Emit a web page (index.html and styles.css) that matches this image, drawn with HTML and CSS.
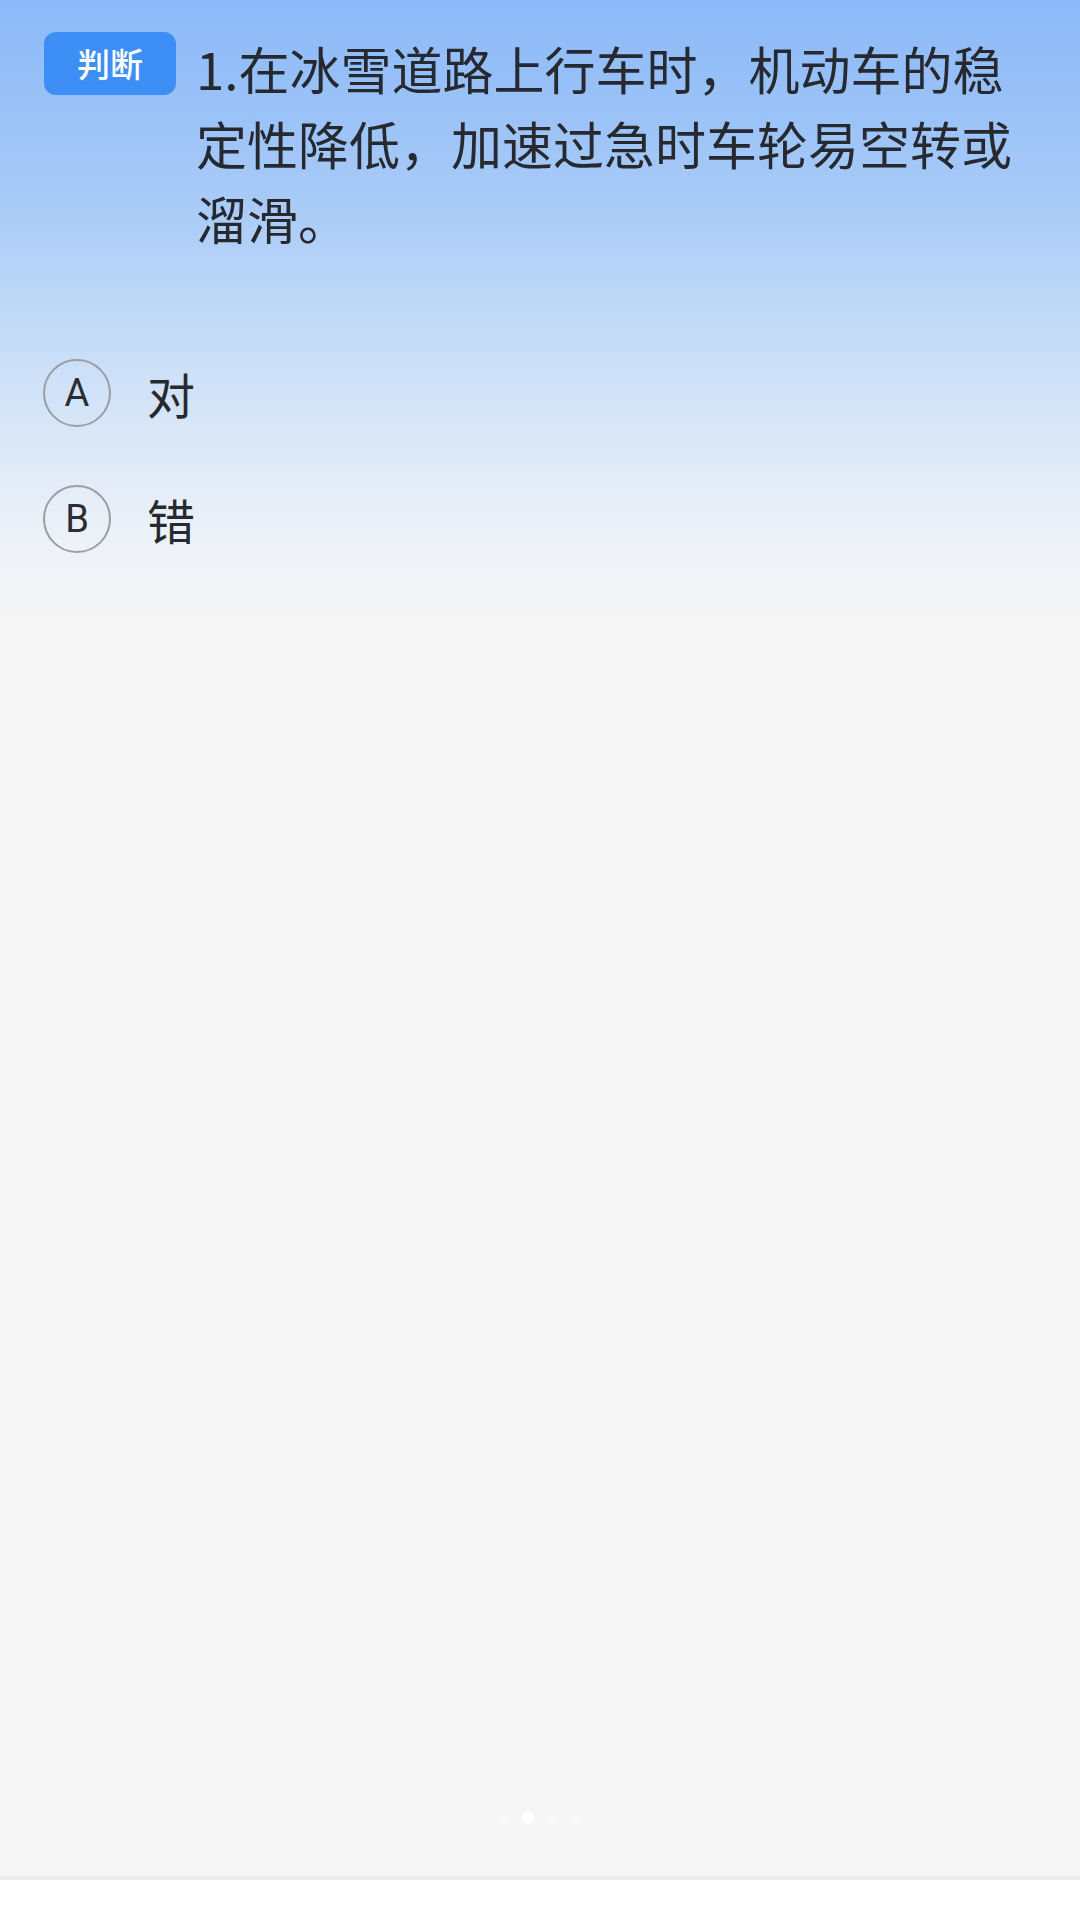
FILE: index.html
```html
<!DOCTYPE html>
<html lang="zh-CN">
<head>
    <meta charset="UTF-8">
    <meta name="viewport" content="width=device-width, initial-scale=1.0">
    <title>判断题</title>
    <link rel="stylesheet" href="styles.css">
</head>
<body>

<div class="screen">
    <div class="question">
        <span class="badge">判断</span>
        <p class="question-text">1.在冰雪道路上行车时，机动车的稳定性降低，加速过急时车轮易空转或溜滑。</p>
    </div>

    <div class="options">
        <div class="option">
            <span class="option-key">A</span>
            <span class="option-label">对</span>
        </div>
        <div class="option">
            <span class="option-key">B</span>
            <span class="option-label">错</span>
        </div>
    </div>

    <div class="pager">
        <span class="dot"></span>
        <span class="dot active"></span>
        <span class="dot"></span>
        <span class="dot"></span>
    </div>
</div>

<div class="bottom-bar"></div>

</body>
</html>
```

FILE: styles.css
```css
body {
    font-family: "Noto Sans CJK SC", "Noto Sans", sans-serif;
    margin: 0;
    padding: 0;
    height: 1920px;
    display: flex;
    flex-direction: column;
    background-color: #ffffff;
}

.screen {
    flex: 1;
    display: flex;
    flex-direction: column;
    padding: 32px 44px 0 44px;
    background: linear-gradient(180deg,
        #8bb9f8 0px,
        #a6c9f7 190px,
        #c1daf7 320px,
        #dbe8f8 440px,
        #edf2f8 540px,
        #f6f6f7 620px,
        #f6f6f6 100%);
}

.question {
    display: flex;
    align-items: flex-start;
    gap: 20px;
}

.badge {
    flex-shrink: 0;
    width: 132px;
    height: 63px;
    border-radius: 12px;
    background-color: #3d8ef5;
    color: white;
    font-size: 33px;
    font-weight: 500;
    line-height: 63px;
    text-align: center;
}

.question-text {
    margin: -1px 0 0 0;
    max-width: 840px;
    font-size: 51px;
    line-height: 75px;
    color: #262a30;
}

.options {
    margin-top: 102px;
    display: flex;
    flex-direction: column;
    gap: 56px;
}

.option {
    display: flex;
    align-items: center;
    gap: 36px;
    margin-left: -1px;
}

.option-key {
    width: 64px;
    height: 64px;
    border: 2px solid #9a9ea4;
    border-radius: 50%;
    display: flex;
    justify-content: center;
    align-items: center;
    font-family: Roboto, "Noto Sans", sans-serif;
    font-size: 38px;
    color: #2a2e34;
}

.option-label {
    font-size: 48px;
    color: #262a30;
}

.pager {
    margin-top: auto;
    margin-bottom: 52px;
    display: flex;
    justify-content: center;
    gap: 12px;
}

.dot {
    width: 12px;
    height: 12px;
    border-radius: 50%;
    background-color: #f9f9f9;
}

.dot.active {
    background-color: #ffffff;
}

.bottom-bar {
    height: 40px;
    border-top: 4px solid #ececec;
    background-color: #ffffff;
}
```
